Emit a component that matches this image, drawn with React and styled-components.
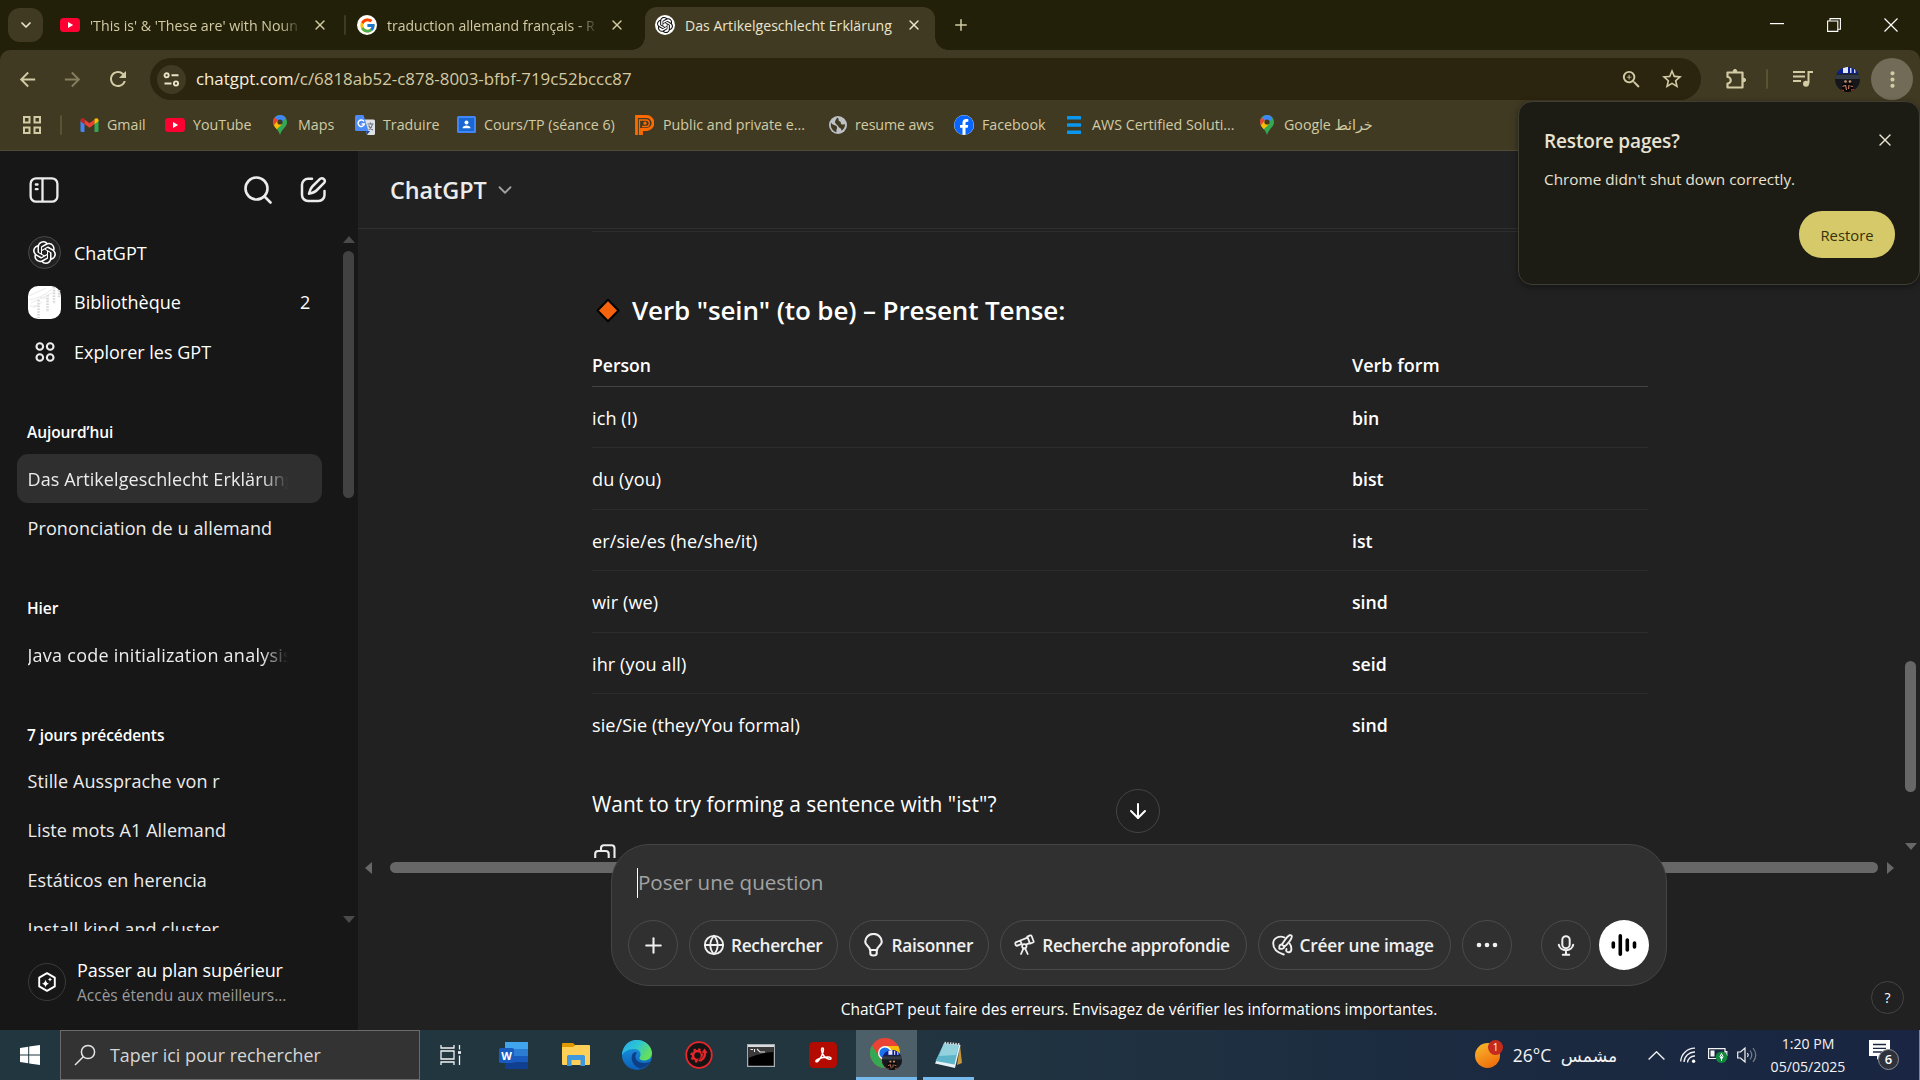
import React from "react";
import styled, { createGlobalStyle, css } from "styled-components";
import { FcGoogle } from "react-icons/fc";
import { FaFacebook } from "react-icons/fa";
import { MdArrowBack, MdArrowForward, MdRefresh, MdZoomIn, MdStarBorder, MdMoreVert } from "react-icons/md";
import { ChevronDown, X, Plus, Globe, ArrowDown } from "lucide-react";

const Global = createGlobalStyle`
  * { box-sizing: border-box; }
  html, body { margin: 0; padding: 0; background: #212121; overflow: hidden; }
  body { font-family: "Open Sans", "Noto Sans", "DejaVu Sans", sans-serif; color: #fff; }
  svg { display: block; flex: none; }
`;

const row = css`
  display: flex;
  align-items: center;
`;

const Screen = styled.div`
  width: 1920px;
  height: 1080px;
  display: flex;
  flex-direction: column;
  overflow: hidden;
  position: relative;
`;

const Txt = styled.span`
  display: block;
  flex: none;
  white-space: nowrap;
  font-size: ${(p) => p.$size || 14}px;
  font-weight: ${(p) => p.$weight || 400};
  letter-spacing: ${(p) => p.$ls || 0}px;
  color: ${(p) => p.$color || "inherit"};
  width: ${(p) => (p.$w ? `${p.$w}px` : "auto")};
`;

const FadeTxt = styled(Txt)`
  overflow: hidden;
  mask-image: linear-gradient(to right, #000 calc(100% - ${(p) => p.$fade || 22}px), transparent);
`;

/* ---------- Browser chrome ---------- */

const TabStrip = styled.div`
  ${row}
  height: 50px;
  flex: none;
  background: #232009;
  padding-left: 8px;
  color: #d2cba4;
`;

const TabSearch = styled.div`
  ${row}
  justify-content: center;
  width: 35px;
  height: 34px;
  border-radius: 12px;
  background: #403a23;
  color: #e8e2c6;
`;

const Tab = styled.div`
  ${row}
  width: ${(p) => p.$width}px;
  padding-left: ${(p) => p.$pad}px;
  gap: 10px;
  height: 43px;
  position: relative;
`;

const ActiveTab = styled(Tab)`
  align-self: flex-end;
  padding-bottom: 7px;
  background: #403a23;
  border-radius: 12px 12px 0 0;
  color: #ebe4ca;
  &::before, &::after {
    content: "";
    position: absolute;
    bottom: 0;
    width: 13px;
    height: 13px;
  }
  &::before {
    left: -13px;
    background: radial-gradient(circle at 0 0, transparent 12.5px, #403a23 13px);
  }
  &::after {
    right: -13px;
    background: radial-gradient(circle at 100% 0, transparent 12.5px, #403a23 13px);
  }
`;

const Divider = styled.span`
  width: 2px;
  height: 20px;
  border-radius: 1px;
  flex: none;
  background: ${(p) => p.$color || "#403a23"};
  margin: 0 ${(p) => p.$after || 0}px 0 ${(p) => p.$before || 0}px;
`;

const Round = styled.span`
  ${row}
  justify-content: center;
  flex: none;
  width: ${(p) => p.$d}px;
  height: ${(p) => p.$d}px;
  border-radius: 50%;
  background: ${(p) => p.$bg || "transparent"};
  border: ${(p) => (p.$line ? `1px solid ${p.$line}` : "none")};
  margin-left: ${(p) => p.$ml || 0}px;
  color: ${(p) => p.$color || "inherit"};
`;

const WindowButtons = styled.div`
  ${row}
  gap: 43px;
  margin-left: auto;
  padding-right: 22px;
`;

const Toolbar = styled.div`
  ${row}
  height: 53px;
  flex: none;
  background: #403a23;
  padding: 5px 7px 0 16px;
  color: #d2cba4;
  border-radius: 10px 10px 0 0;
`;
const ToolbarBack = styled.div`
  background: #232009;
`;

const NavButtons = styled.div`
  ${row}
  gap: 22px;
  width: 134px;
`;

const Omnibox = styled.div`
  ${row}
  width: 1552px;
  height: 42px;
  border-radius: 21px;
  background: #2b240f;
  padding: 0 17px 0 7px;
  gap: 10px;
  & > span { line-height: 24px; }
`;

const Host = styled.span`
  color: #f5efdc;
`;

const OmniActions = styled.div`
  ${row}
  gap: 17px;
  margin-left: auto;
`;

const Extensions = styled.div`
  ${row}
  margin-left: 24px;
  flex: 1;
`;

const Avatar = styled.span`
  width: 25px;
  height: 25px;
  border-radius: 50%;
  overflow: hidden;
  margin-left: 21px;
`;

const Bookmarks = styled.div`
  ${row}
  height: 48px;
  flex: none;
  background: #403a23;
  border-bottom: 1px solid #504b36;
  padding: 0 0 4px 23px;
  color: #d2cba4;
`;

const Bookmark = styled.div`
  ${row}
  width: ${(p) => p.$width}px;
  gap: ${(p) => p.$gap || 8}px;
`;

/* ---------- Restore bubble ---------- */

const Bubble = styled.div`
  position: absolute;
  z-index: 5;
  left: 1518px;
  top: 101px;
  width: 402px;
  height: 184px;
  border-radius: 14px;
  background: #1d1c14;
  border: 1px solid #403e33;
  box-shadow: 0 2px 6px rgba(0, 0, 0, 0.4);
  padding: 26px 24px 26px 25px;
  display: flex;
  flex-direction: column;
  color: #e8e3d2;
`;

const BubbleHead = styled.div`
  display: flex;
  justify-content: space-between;
  align-items: flex-start;
  height: 41px;
  & > svg { margin-top: 2px; }
`;

const RestoreButton = styled.div`
  ${row}
  justify-content: center;
  align-self: flex-end;
  margin-top: auto;
  width: 96px;
  height: 47px;
  border-radius: 23px;
  background: #d5c969;
  color: #37310a;
`;

/* ---------- Page ---------- */

const Page = styled.div`
  display: flex;
  height: 879px;
  flex: none;
`;

const Sidebar = styled.aside`
  width: 358px;
  flex: none;
  background: #171717;
  display: flex;
  flex-direction: column;
  color: #ececec;
`;

const SideTop = styled.div`
  ${row}
  height: 77px;
  flex: none;
  padding: 0 31px 0 29px;
  gap: 28px;
  & > :first-child { margin-right: auto; }
`;

const SideScroll = styled.div`
  display: flex;
  height: 703px;
  overflow: hidden;
`;

const SideList = styled.div`
  width: 322px;
  padding-left: 17px;
`;

const SideLink = styled.div`
  ${row}
  height: ${(p) => p.$h || 49}px;
  padding: 0 12px 0 11px;
  gap: 13px;
  color: #fff;
`;

const SideHeading = styled.div`
  height: 33px;
  margin-top: ${(p) => p.$mt}px;
  padding-left: 10px;
  display: flex;
  color: #fff;
  & > span { line-height: 22px; }
`;

const ChatItem = styled.div`
  ${row}
  height: 49.2px;
  padding-left: 10.5px;
  border-radius: 11px;
  background: ${(p) => (p.$active ? "#2f2f2f" : "transparent")};
`;

const SideBar = styled.div`
  display: flex;
  flex-direction: column;
  align-items: center;
  width: 13px;
  margin-left: 20px;
  padding: 8px 0 8px;
  & > :nth-child(2) { margin: 8px 0 auto; }
`;

const Thumb = styled.span`
  flex: none;
  border-radius: 6px;
  background: ${(p) => p.$color};
  width: ${(p) => p.$w}px;
  height: ${(p) => p.$h}px;
`;

const Arrow = styled.span`
  width: 0;
  height: 0;
  flex: none;
  border: 6.5px solid transparent;
  ${(p) => p.$dir === "up" && css`border-top: 0; border-bottom: 7px solid ${p.$color};`}
  ${(p) => p.$dir === "down" && css`border-bottom: 0; border-top: 7px solid ${p.$color};`}
  ${(p) => p.$dir === "left" && css`border-left: 0; border-right: 7px solid ${p.$color};`}
  ${(p) => p.$dir === "right" && css`border-right: 0; border-left: 7px solid ${p.$color};`}
`;

const Upgrade = styled.div`
  ${row}
  flex: 1;
  padding: 2px 0 0 28px;
  gap: 11px;
`;

const UpgradeText = styled.div`
  display: flex;
  flex-direction: column;
  padding-top: 3px;
  & > span { line-height: 25px; }
`;

const Main = styled.main`
  flex: 1;
  background: #212121;
  display: flex;
  flex-direction: column;
  position: relative;
`;

const ChatHeader = styled.header`
  ${row}
  height: 78px;
  flex: none;
  border-bottom: 1px solid #2f2f2f;
  padding-left: 32px;
  gap: 7px;
  color: #ececec;
`;

const Viewport = styled.div`
  height: 629px;
  overflow: hidden;
  display: flex;
  justify-content: space-between;
`;

const Article = styled.article`
  width: 1056px;
  margin: 2px 0 0 234px;
  border-top: 1px solid #2d2d2d;
`;

const Title = styled.h3`
  ${row}
  margin: 58px 0 0;
  height: 40px;
  gap: 12px;
  padding-left: 4px;
`;

const TableRow = styled.div`
  display: grid;
  grid-template-columns: 760px 1fr;
  align-items: center;
  height: ${(p) => (p.$head ? 57 : 61.4)}px;
  padding-top: ${(p) => (p.$head ? 14 : 1.5)}px;
  border-bottom: ${(p) => (p.$head ? "1px solid #454545" : p.$last ? "none" : "1px solid #2d2d2d")};
`;

const Question = styled.div`
  ${row}
  height: 40px;
  margin-top: 29px;
`;

const CopyLine = styled.div`
  padding: 20px 0 0 2px;
`;

const MainBar = styled.div`
  display: flex;
  flex-direction: column;
  align-items: center;
  width: 13px;
  margin-right: 3px;
  padding: 432px 0 8px;
  justify-content: space-between;
`;

const HBar = styled.div`
  ${row}
  height: 19px;
  padding-left: 7px;
  & > :nth-child(2) { margin: 0 9px 0 18px; }
`;

const BottomArea = styled.div`
  flex: 1;
  ${row}
  align-items: flex-end;
  justify-content: flex-end;
`;

const Note = styled.div`
  ${row}
  justify-content: center;
  width: 1056px;
  height: 42px;
  margin-right: 204px;
`;

const HelpWrap = styled.div`
  width: 49px;
  height: 49px;
`;

const ScrollDown = styled.div`
  position: absolute;
  left: 758px;
  top: 638px;
`;

const Composer = styled.div`
  position: absolute;
  left: 253px;
  top: 693px;
  width: 1056px;
  height: 142px;
  border-radius: 38px;
  background: #303030;
  border: 1px solid #454545;
  padding: 22px 17px 15px 16px;
  display: flex;
  flex-direction: column;
  justify-content: space-between;
`;

const Field = styled.div`
  ${row}
  height: 31px;
  padding-left: 9px;
  & > span { line-height: 26px; padding-bottom: 2px; }
`;

const Caret = styled.i`
  width: 1px;
  height: 30px;
  background: #fff;
`;

const Tools = styled.div`
  ${row}
  gap: 11px;
`;

const Pill = styled.div`
  ${row}
  height: 50px;
  width: ${(p) => p.$w}px;
  padding-left: ${(p) => p.$pad || 13}px;
  border-radius: 25px;
  border: 1px solid #4b4b4b;
  gap: ${(p) => p.$gap || 6}px;
  color: #f0f0f0;
`;

/* ---------- Taskbar ---------- */

const Taskbar = styled.div`
  ${row}
  height: 50px;
  flex: none;
  background: linear-gradient(90deg, #21363e 0%, #22363f 40%, #1f3141 60%, #1b2a40 78%, #192542 100%);
  color: #f3f3f3;
`;

const Cell = styled.div`
  ${row}
  justify-content: center;
  flex: none;
  height: 50px;
  width: ${(p) => p.$w}px;
  margin-left: ${(p) => p.$ml || 0}px;
  background: ${(p) => (p.$active ? "#4d5f68" : "transparent")};
  border-bottom: ${(p) => (p.$open ? "3px solid #76b9ed" : "none")};
  padding-top: ${(p) => (p.$open ? 2 : 0)}px;
`;

const WinSearch = styled.div`
  ${row}
  width: 360px;
  height: 50px;
  background: #333333;
  border: 1px solid #6b6b6b;
  padding-left: 13px;
  gap: 14px;
`;

const Tray = styled.div`
  ${row}
  margin-left: auto;
  width: 445px;
`;

const Clock = styled.div`
  width: 90px;
  display: flex;
  flex-direction: column;
  align-items: center;
  margin-left: 5px;
  & > span { line-height: 23px; }
`;

const ShowDesktop = styled.span`
  width: 1px;
  height: 50px;
  background: #7c8496;
  margin-left: 20px;
`;

/* ---------- Icons ---------- */

const OpenAI = ({ size, color }) => (
  <svg width={size} height={size} viewBox="0 0 24 24" fill={color}>
    <path d="M22.2819 9.8211a5.9847 5.9847 0 0 0-.5157-4.9108 6.0462 6.0462 0 0 0-6.5098-2.9A6.0651 6.0651 0 0 0 4.9807 4.1818a5.9847 5.9847 0 0 0-3.9977 2.9 6.0462 6.0462 0 0 0 .7427 7.0966 5.98 5.98 0 0 0 .511 4.9107 6.051 6.051 0 0 0 6.5146 2.9001A5.9847 5.9847 0 0 0 13.2599 24a6.0557 6.0557 0 0 0 5.7718-4.2058 5.9894 5.9894 0 0 0 3.9977-2.9001 6.0557 6.0557 0 0 0-.7475-7.0729zm-9.022 12.6081a4.4755 4.4755 0 0 1-2.8764-1.0408l.1419-.0804 4.7783-2.7582a.7948.7948 0 0 0 .3927-.6813v-6.7369l2.02 1.1686a.071.071 0 0 1 .038.052v5.5826a4.504 4.504 0 0 1-4.4945 4.4944zm-9.6607-4.1254a4.4708 4.4708 0 0 1-.5346-3.0137l.142.0852 4.783 2.7582a.7712.7712 0 0 0 .7806 0l5.8428-3.3685v2.3324a.0804.0804 0 0 1-.0332.0615L9.74 19.9502a4.4992 4.4992 0 0 1-6.1408-1.6464zM2.3408 7.8956a4.485 4.485 0 0 1 2.3655-1.9728V11.6a.7664.7664 0 0 0 .3879.6765l5.8144 3.3543-2.0201 1.1685a.0757.0757 0 0 1-.071 0l-4.8303-2.7865A4.504 4.504 0 0 1 2.3408 7.872zm16.5963 3.8558L13.1038 8.364 15.1192 7.2a.0757.0757 0 0 1 .071 0l4.8303 2.7913a4.4944 4.4944 0 0 1-.6765 8.1042v-5.6772a.79.79 0 0 0-.407-.667zm2.0107-3.0231l-.142-.0852-4.7735-2.7818a.7759.7759 0 0 0-.7854 0L9.409 9.2297V6.8974a.0662.0662 0 0 1 .0284-.0615l4.8303-2.7866a4.4992 4.4992 0 0 1 6.6802 4.66zM8.3065 12.863l-2.02-1.1638a.0804.0804 0 0 1-.038-.0567V6.0742a4.4992 4.4992 0 0 1 7.3757-3.4537l-.142.0805L8.704 5.459a.7948.7948 0 0 0-.3927.6813zm1.0976-2.3654l2.602-1.4998 2.6069 1.4998v2.9994l-2.5974 1.4997-2.6067-1.4997Z" />
  </svg>
);

const YouTube = () => (
  <svg width="20" height="14" viewBox="0 0 20 14">
    <rect width="20" height="14" rx="3.5" fill="#ff0033" />
    <path d="M8 4l5.2 3L8 10z" fill="#fff" />
  </svg>
);

const Gmail = () => (
  <svg width="19" height="14" viewBox="0 0 18 14">
    <path d="M0 2.5V12.7Q0 14 1.3 14H4V6z" fill="#4285f4" />
    <path d="M18 2.5V12.7Q18 14 16.7 14H14V6z" fill="#34a853" />
    <path d="M4 1.4L9 5.2 14 1.4V6L9 9.8 4 6z" fill="#ea4335" />
    <path d="M0 2.3C0 .2 2.2-.6 4 1V6.2L0 3.2z" fill="#c5221f" />
    <path d="M18 2.3C18 .2 15.8-.6 14 1V6.2L18 3.2z" fill="#fbbc04" />
  </svg>
);

const MapsPin = () => (
  <svg width="14" height="20" viewBox="0 0 14 20">
    <path d="M7 0C3 0 0 3.1 0 7c0 2 .8 3.500 1.800 4.800C4 14.500 6 16.500 7 20c1-3.500 3-5.500 5.200-8.200C13.200 10.500 14 9 14 7c0-3.900-3-7-7-7z" fill="#34a853" />
    <path d="M7 0c2.400 0 4.500 1.200 5.700 3L7 9.400 2 4.600 3 1.600C4.100.6 5.500 0 7 0z" fill="#4285f4" />
    <path d="M1.600 2.500L5 5.300 1.200 10.900C.5 9.700 0 8.500 0 7c0-1.700.6-3.300 1.600-4.500z" fill="#ea4335" />
    <path d="M.9 10.300L4.800 5.600 9 9.200l-5.300 5C2.800 13 1.700 12 .9 10.300z" fill="#fbbc04" />
    <circle cx="7" cy="7" r="2.600" fill="#403a23" />
  </svg>
);

const Translate = () => (
  <svg width="20" height="20" viewBox="0 0 20 20">
    <path d="M8 4.500H18.500Q20 4.500 20 6V18.500Q20 20 18.500 20H12z" fill="#dfe1e5" />
    <path d="M11 16H15L12 20z" fill="#174ea6" />
    <path d="M1.500 0H8.500L13.500 16H1.500Q0 16 0 14.500V1.500Q0 0 1.500 0z" fill="#4c8bf5" />
    <path d="M9 6.500A3.200 3.200 0 1 0 9.400 9H6.600" fill="none" stroke="#fff" strokeWidth="1.400" />
    <path d="M12.500 9H18.500M15.500 7.500V9M17.500 9C17 12 15 14 13.800 14.800M13.600 10.500C14.500 12.500 16 14 18 15" fill="none" stroke="#6b7280" strokeWidth="1.200" />
  </svg>
);

const Classroom = () => (
  <svg width="19" height="17" viewBox="0 0 19 17">
    <rect width="19" height="17" rx="1.500" fill="#4285f4" />
    <rect x="2" y="2" width="15" height="13" fill="#1967d2" />
    <circle cx="9.500" cy="6.500" r="2" fill="#fff" />
    <path d="M5.500 12.300C5.500 10.400 7.500 9.600 9.500 9.600s4 .8 4 2.700z" fill="#fff" />
  </svg>
);

const OrangeP = () => (
  <svg width="19" height="20" viewBox="0 0 19 20" fill="none" stroke="#ff6a00">
    <path d="M1.500 20V1.500H11.500A6 6 0 0 1 11.500 14.500H6.500V20" strokeWidth="2.800" />
    <path d="M4.500 20V5H11A3 3 0 0 1 11 11.500H7" strokeWidth="1.300" />
    <circle cx="10" cy="8.200" r="1.600" fill="#ff6a00" stroke="none" />
  </svg>
);

const GreyGlobe = () => (
  <svg width="18" height="18" viewBox="0 0 18 18">
    <circle cx="9" cy="9" r="9" fill="#bdc1c6" />
    <path d="M2 6.500C3.500 9.500 7.500 8.800 8 11c.4 2-1 2.500-.5 5.200C3.500 15.600 1 11 2 6.500zM8 1.800C11 2.500 8.500 4.500 10.500 5.200 12.800 6 11 8.200 13 8.500c1.500.2 2.400-.4 3.200-.2-.2 3.500-2.200 5.600-3.700 6.500 0-2.800-1.800-2.300-3-4C8.500 8.500 5.800 7.800 6 5.800 6.200 4.200 7.500 3.500 8 1.800z" fill="#403a23" />
  </svg>
);

const Bars = () => (
  <svg width="14" height="18" viewBox="0 0 14 18" fill="#0a97f0">
    <rect width="14" height="3.600" rx=".6" />
    <rect y="7.200" width="14" height="3.600" rx=".6" />
    <rect y="14.400" width="14" height="3.600" rx=".6" />
  </svg>
);

const AppsGrid = () => (
  <svg width="18" height="18" viewBox="0 0 18 18" fill="none" stroke="#d2cba4" strokeWidth="2">
    <rect x="1" y="1" width="5.500" height="5.500" />
    <rect x="11.500" y="1" width="5.500" height="5.500" />
    <rect x="1" y="11.500" width="5.500" height="5.500" />
    <rect x="11.500" y="11.500" width="5.500" height="5.500" />
  </svg>
);

const SiteTune = () => (
  <svg width="17" height="15" viewBox="0 0 17 15" fill="none" stroke="#e8e2c6" strokeWidth="1.900">
    <circle cx="3.600" cy="3.300" r="2.100" />
    <path d="M8.500 3.300H15.500M1.500 11.500H8.500" />
    <circle cx="13" cy="11.500" r="2.100" />
  </svg>
);

const Puzzle = () => (
  <svg width="22" height="22" viewBox="0 0 22 22" fill="none" stroke="#d2cba4" strokeWidth="2.200" strokeLinejoin="round">
    <path d="M2.500 4.500H17.500V19.500H2.500V15.500A3.200 3.200 0 0 0 2.500 9z" />
    <path d="M8.200 4V3.200a1.800 1.800 0 0 1 3.600 0V4zM18 10.200h.8a1.800 1.800 0 0 1 0 3.600H18z" fill="#d2cba4" strokeWidth="1" />
  </svg>
);

const MusicQueue = () => (
  <svg width="21" height="18" viewBox="0 0 21 18" fill="none" stroke="#d2cba4" strokeWidth="2">
    <path d="M0 2H12M0 6.500H12M0 11H8" />
    <path d="M15.500 13.500V2H20" />
    <circle cx="13" cy="13.700" r="3" fill="#d2cba4" stroke="none" />
  </svg>
);

const Photo = ({ size }) => (
  <svg width={size} height={size} viewBox="0 0 25 25">
    <clipPath id={`ph${size}`}><circle cx="12.500" cy="12.500" r="12.500" /></clipPath>
    <g clipPath={`url(#ph${size})`}>
      <rect width="25" height="25" fill="#20242b" />
      <rect width="25" height="6.500" fill="#0a1f9c" />
      <rect x="8" y="0" width="5" height="6" fill="#e8e8f2" />
      <rect x="15" y="1" width="1.500" height="5" fill="#cfd6f5" />
      <rect x="19" y="1" width="1.500" height="5" fill="#cfd6f5" />
      <rect y="8" width="25" height="4" fill="#343b45" />
      <rect y="12" width="25" height="13" fill="#15171b" />
      <path d="M7 25V17q3-3 5 0 3-3 6 0V25z" fill="#08080a" />
      <circle cx="10.500" cy="14.500" r="1.300" fill="#c98f6d" />
      <circle cx="15" cy="14.500" r="1.300" fill="#c98f6d" />
      <path d="M7.500 19.500l2.500-1M10.500 18l1 5M14 18l-.5 4M15.500 19l2.500.5" stroke="#c07a5c" strokeWidth="1.200" />
      <path d="M6 23.500h3M16 23h4" stroke="#a33a2c" strokeWidth="1.400" />
    </g>
  </svg>
);

const PanelIcon = () => (
  <svg width="30" height="26" viewBox="0 0 30 26" fill="none" stroke="#ececec" strokeWidth="2.300" strokeLinecap="round">
    <rect x="1.600" y="1.300" width="26.800" height="23.400" rx="5.500" />
    <path d="M13.500 1.300V24.700" strokeLinecap="butt" />
    <path d="M6.800 7.500H8.600M6.800 12.200H8.600" />
  </svg>
);

const SearchIcon = () => (
  <svg width="28" height="28" viewBox="0 0 28 28" fill="none" stroke="#ececec" strokeWidth="2.600" strokeLinecap="round">
    <circle cx="12.500" cy="12.500" r="11" />
    <path d="M20.500 20.500L26.500 26.500" />
  </svg>
);

const NewChat = () => (
  <svg width="27" height="27" viewBox="0 0 27 27" fill="none" stroke="#ececec" strokeWidth="2.500" strokeLinecap="round" strokeLinejoin="round">
    <path d="M12 2.800H8A6 6 0 0 0 2 8.800V19a6 6 0 0 0 6 6H18.500a6 6 0 0 0 6-6V15" />
    <path d="M20.300 2.700a2.900 2.900 0 0 1 4 4L16.500 14.500C14.500 16.500 12 17 9 17.700 9.800 14.800 10.300 12.500 12.300 10.500z" />
  </svg>
);

const Library = () => (
  <svg width="33" height="33" viewBox="0 0 33 33">
    <rect width="33" height="33" rx="10" fill="#fff" />
    <g stroke="#d6d6d6" strokeWidth="2.600" strokeDasharray="1.600 1.200">
      <path d="M26 1V18M19.500 9V26M10.500 14V32M31 4V11" />
    </g>
    <path d="M1 14Q14 12 24 3M1 10L18 2M3 17L24 7M5 22L14 16M2 20H10M12 12H19" fill="none" stroke="#e6e6e6" strokeWidth=".9" />
  </svg>
);

const FourDots = () => (
  <svg width="20" height="20" viewBox="0 0 20 20" fill="none" stroke="#ececec" strokeWidth="2.100">
    <circle cx="4.800" cy="4.500" r="3.300" />
    <circle cx="15.200" cy="4.500" r="3.300" />
    <circle cx="4.800" cy="15.500" r="3.300" />
    <circle cx="15.200" cy="15.500" r="3.300" />
  </svg>
);

const PlanIcon = () => (
  <svg width="20" height="20" viewBox="0 0 20 20" fill="none" stroke="#fff" strokeWidth="1.900" strokeLinejoin="round">
    <path d="M10 1.200L17.800 5.600V14.400L10 18.800 2.200 14.400V5.600z" />
    <path d="M8.500 7.500Q9 11 12 11.700 9 12.300 8.500 15.500 8 12.300 5 11.700 8 11 8.500 7.500zM13 5.200Q13.200 7.200 15 7.600 13.200 8 13 9.800 12.800 8 11 7.600 12.800 7.200 13 5.200z" fill="#fff" stroke="none" />
  </svg>
);

const CopyIcon = () => (
  <svg width="22" height="22" viewBox="0 0 22 22" fill="none" stroke="#ececec" strokeWidth="2.100">
    <rect x="1.200" y="7" width="13.500" height="14" rx="3" />
    <path d="M7 7V4.200A3 3 0 0 1 10 1.200H17.500A3 3 0 0 1 20.500 4.200V15" />
  </svg>
);

const Diamond = () => (
  <svg width="24" height="25" viewBox="0 0 24 25">
    <path d="M12 1.800L22.500 12.500 12 23.200 1.500 12.500z" fill="#f7630c" stroke="#000" strokeWidth="2" strokeLinejoin="round" />
  </svg>
);

const Bulb = () => (
  <svg width="19" height="24" viewBox="0 0 19 24" fill="none" stroke="#f0f0f0" strokeWidth="2.100" strokeLinejoin="round">
    <path d="M6 17C6 13.500 1.200 12.500 1.200 8.800A8.200 7.800 0 0 1 17.800 8.800C17.800 12.500 13 13.500 13 17z" />
    <path d="M6.300 17V20.500Q6.300 22.500 9.500 22.500T12.700 20.500V17" />
  </svg>
);

const Telescope = () => (
  <svg width="21" height="22" viewBox="0 0 21 22" fill="none" stroke="#f0f0f0" strokeWidth="1.800" strokeLinejoin="round" strokeLinecap="round">
    <path d="M13.300 2.600L16.200 1.400Q17.200 1.100 17.600 2L19.600 7.200Q19.900 8.100 19 8.500L16 9.600z" />
    <path d="M13.500 3.600L6.300 6.500M15.500 9.200L12.500 10.400M6.300 6.500L2.200 8.200Q1 8.700 1.400 10L1.700 10.900Q2.200 12.100 3.400 11.600L7.800 9.900M6.300 6.500L7.700 10" />
    <circle cx="10.300" cy="12.300" r="2.200" />
    <path d="M9.500 14.300L7 20M11.100 14.300L13.700 20" />
  </svg>
);

const Brush = () => (
  <svg width="21" height="22" viewBox="0 0 21 22" fill="none" stroke="#f0f0f0" strokeWidth="1.900" strokeLinejoin="round" strokeLinecap="round">
    <path d="M12.500 3.500C7.500 1.200 1.200 3.800 1.200 9.500 1.200 15 6 18.800 11.800 20.500" />
    <path d="M17.300 1.300Q20.300.6 19.700 3.300C18.800 6.300 14.800 10.800 12.300 12.800L10 10.400C12 7.200 14.800 2.500 17.300 1.300z" />
    <path d="M10 10.500C7.200 10.300 7.200 12.500 7.400 14.800 9.800 15 12.200 15 12.300 12.700" />
    <path d="M17.600 9.500C20.300 13 20 18 16.800 18.200 14.500 18.300 13.600 16.700 14.500 15" />
  </svg>
);

const Mic = () => (
  <svg width="18" height="21" viewBox="0 0 18 21" fill="none" stroke="#f0f0f0" strokeWidth="2" strokeLinecap="round">
    <rect x="5.300" y="1.200" width="7.400" height="12" rx="3.700" />
    <path d="M1.800 9.800A7.300 6.500 0 0 0 16.200 9.800M9 16.500V19.500M5.800 19.700H12.200" />
  </svg>
);

const Voice = () => (
  <svg width="26" height="24" viewBox="0 0 26 24" fill="none" stroke="#000" strokeWidth="3.600" strokeLinecap="round">
    <path d="M2.300 10V14M9.300 2.800V21.200M16.300 7V17M23.500 10V14" />
  </svg>
);

const Dots = () => (
  <svg width="22" height="6" viewBox="0 0 22 6" fill="#f0f0f0">
    <circle cx="3" cy="3" r="2.300" />
    <circle cx="11" cy="3" r="2.300" />
    <circle cx="19" cy="3" r="2.300" />
  </svg>
);

const Minimize = () => (
  <svg width="14" height="14" viewBox="0 0 14 14"><rect y="5" width="14" height="1.200" fill="#fff" /></svg>
);
const Restore = () => (
  <svg width="14" height="14" viewBox="0 0 14 14" fill="none" stroke="#fff" strokeWidth="1.100">
    <path d="M.6 3H10.800V13.400H.6zM3 3V.6H13.400V11.200H10.800" />
  </svg>
);
const CloseWin = () => (
  <svg width="14" height="14" viewBox="0 0 14 14" stroke="#fff" strokeWidth="1.200"><path d="M.5.5L13.500 13.500M13.500.5L.5 13.500" /></svg>
);

const WindowsLogo = () => (
  <svg width="20" height="20" viewBox="0 0 20 20" fill="#fff">
    <path d="M0 2.900L8.200 1.700V9.500H0zM9.200 1.500L20 0V9.500H9.200zM0 10.500H8.200V18.300L0 17.100zM9.200 10.500H20V20L9.200 18.500z" />
  </svg>
);

const WinSearchIcon = () => (
  <svg width="22" height="22" viewBox="0 0 22 22" fill="none" stroke="#e6e6e6" strokeWidth="1.500">
    <circle cx="14" cy="8" r="6.600" />
    <path d="M9.300 12.700L1 21" />
  </svg>
);

const TaskView = () => (
  <svg width="22" height="20" viewBox="0 0 22 20" fill="none" stroke="#f3f3f3" strokeWidth="1.300">
    <path d="M1 0V3H14V0M1 20V17H14V20M1 6H14V14H1zM19.500 0V4.500M19.500 10.500V20" />
    <rect x="18" y="6.200" width="3" height="2.600" fill="#f3f3f3" stroke="none" />
  </svg>
);

const WordTile = styled.span`
  position: absolute;
  left: 0;
  top: 6px;
  width: 15px;
  height: 15px;
  border-radius: 1.5px;
  background: #185abd;
  color: #fff;
  font-weight: 700;
  font-size: 11px;
  line-height: 15px;
  text-align: center;
`;
const WordBox = styled.span`
  position: relative;
  width: 29px;
  height: 27px;
  padding-left: 6px;
`;
const Word = () => (
  <WordBox>
    <svg width="23" height="27" viewBox="0 0 23 27">
      <rect width="23" height="7" fill="#41a5ee" />
      <rect y="7" width="23" height="7" fill="#2b7cd3" />
      <rect y="14" width="23" height="6.500" fill="#185abd" />
      <rect y="20.500" width="23" height="6.500" fill="#103f91" />
    </svg>
    <WordTile>W</WordTile>
  </WordBox>
);

const Folder = () => (
  <svg width="28" height="24" viewBox="0 0 28 24">
    <path d="M0 1Q0 0 1 0H11L13.500 2.500V6H0z" fill="#e09a00" />
    <path d="M0 4H11L13.500 2H27Q28 2 28 3V21Q28 22 27 22H1Q0 22 0 21z" fill="#ffd057" />
    <path d="M5 13.500Q5 12 6.500 12H21.500Q23 12 23 13.500V23H18.500V17H9.500V23H5z" fill="#3f98dd" />
  </svg>
);

const Edge = () => (
  <svg width="30" height="30" viewBox="0 0 30 30">
    <defs>
      <linearGradient id="edgeA" x1="0" y1="0" x2="1" y2=".5"><stop offset="0" stopColor="#28a8ea" /><stop offset=".5" stopColor="#2cc4d6" /><stop offset="1" stopColor="#66e05a" /></linearGradient>
      <linearGradient id="edgeB" x1="0" y1="0" x2="0" y2="1"><stop offset="0" stopColor="#1b9de2" /><stop offset="1" stopColor="#0c5fba" /></linearGradient>
    </defs>
    <circle cx="15" cy="15" r="15" fill="url(#edgeB)" />
    <path d="M1 10C4 2 10 0 15 0 24 0 30 7 30 13c0 5-4 7.500-8 7.500-3.500 0-5-1.500-4.500-3C19.500 15 19 9 12 9 6 9 2 12 0 15 0 13 .3 11.500 1 10z" fill="url(#edgeA)" />
    <path d="M10.500 14C8 19 11 26 18 28.500 22 28 26.500 25 28.200 21.500 24 24 15 24 13.500 17.500 13.200 15.500 14 13.500 15 12.500 13 12 11.500 12.500 10.500 14z" fill="#0d3f86" />
  </svg>
);

const RedGear = () => (
  <svg width="28" height="28" viewBox="0 0 28 28">
    <circle cx="14" cy="14" r="12.800" fill="#141414" stroke="#e8262b" strokeWidth="1.800" />
    <circle cx="12.500" cy="14.500" r="4.500" fill="none" stroke="#e8262b" strokeWidth="2.600" />
    <circle cx="12.500" cy="14.500" r="6.300" fill="none" stroke="#e8262b" strokeWidth="1.800" strokeDasharray="2.400 2.550" />
    <path d="M13 18.500Q18.500 18 18.500 12H16L19.500 7 23 12H21.500Q21.500 19.500 14 21z" fill="#e8262b" stroke="#141414" strokeWidth=".6" />
  </svg>
);

const Cmd = () => (
  <svg width="28" height="23" viewBox="0 0 28 23">
    <rect x=".6" y=".6" width="26.800" height="21.800" fill="#000" stroke="#a7adb0" strokeWidth="1.300" />
    <rect x="1" y="1" width="26" height="2" fill="#d9dcde" />
    <path d="M1.300 3H26.700V8Q12 9 1.300 14z" fill="#3a3a3a" />
    <path d="M3.500 5.500H6M7.500 5V8M10 5L13 8H18" stroke="#e6e6e6" strokeWidth="1.100" fill="none" />
  </svg>
);

const Acrobat = () => (
  <svg width="28" height="26" viewBox="0 0 28 26">
    <rect width="28" height="26" rx="4.500" fill="#b30b00" />
    <path d="M7 19.500C6 18.300 10 16.300 14 15.500s8-.7 8 1-4.500.5-7-2.500-3.200-8-1.500-8 .8 4.500-1 8-4.500 7-5.500 5.500z" fill="none" stroke="#fff" strokeWidth="1.500" />
  </svg>
);

const Chrome = () => (
  <svg width="34" height="33" viewBox="0 0 34 33">
    <circle cx="15" cy="15" r="15" fill="#ea4335" />
    <path d="M2 7.500L9.500 19 15 30A15 15 0 0 1 2 7.500z" fill="#34a853" />
    <path d="M15 30L21 18 15 8H28.300A15 15 0 0 1 15 30z" fill="#fbbc04" />
    <circle cx="15" cy="15" r="7" fill="#fff" />
    <circle cx="15" cy="15" r="5.600" fill="#1a73e8" />
    <g transform="translate(12 12)"><Photo size={20} /></g>
  </svg>
);

const Notepad = () => (
  <svg width="28" height="28" viewBox="0 0 28 28">
    <path d="M25 4L27 22 22 24z" fill="#c8963a" />
    <path d="M9 2.500L25.500 4 20 27 0 22.500z" fill="#e9f2f4" />
    <path d="M9 2.500L24 4 19.500 23.500 .5 20z" fill="#5cb5c8" />
    <path d="M9 2.500L24 4 21 14 4 15z" fill="#a6dbe4" opacity=".75" />
    <path d="M9.500 2L25.500 3.500" stroke="#d8d8d8" strokeWidth="2.400" strokeDasharray="1.500 1.200" />
  </svg>
);

const SunBox = styled.span`
  position: relative;
  width: 28px;
  height: 30px;
  padding-top: 3px;
`;
const CountBadge = styled.span`
  position: absolute;
  left: 13px;
  top: 0;
  width: 15px;
  height: 15px;
  border-radius: 50%;
  background: #c42b1c;
  color: #fff;
  font-size: 10px;
  line-height: 15px;
  text-align: center;
`;
const NotifyBox = styled.span`
  position: relative;
  width: 30px;
  height: 30px;
`;
const NotifyBadge = styled.span`
  position: absolute;
  left: 9px;
  top: 9px;
  width: 21px;
  height: 21px;
  border-radius: 50%;
  border: 1px solid #8b8f99;
  background: #30323b;
  color: #fff;
  font-weight: 600;
  font-size: 13px;
  line-height: 19px;
  text-align: center;
`;

const WifiIcon = () => (
  <svg width="16" height="17" viewBox="0 0 16 17" fill="none" stroke="#f3f3f3" strokeWidth="1.300">
    <path d="M.7 14.500A14 14 0 0 1 15 1.200M4 15A10.500 10.500 0 0 1 15 5M7.500 15.500A7 7 0 0 1 15 9" />
    <circle cx="13.600" cy="14.300" r="1.700" fill="#fff" stroke="none" />
  </svg>
);
const Battery = () => (
  <svg width="20" height="16" viewBox="0 0 20 16">
    <path d="M.6 1.600H17V11.500H.6zM17.500 4.500H18.800V8.500H17.500" fill="none" stroke="#f3f3f3" strokeWidth="1.200" />
    <rect x="2.500" y="3.500" width="4" height="6" fill="#f3f3f3" />
    <circle cx="13.500" cy="10.200" r="5.800" fill="#10893e" />
    <path d="M13.500 6.500Q16.500 9.500 13.500 12.500 10.500 9.500 13.500 6.500zM13.500 9V14" fill="none" stroke="#fff" strokeWidth="1" />
  </svg>
);
const Sound = () => (
  <svg width="21" height="18" viewBox="0 0 21 18" fill="none" stroke="#f3f3f3" strokeWidth="1.200">
    <path d="M.7 6V12H3.500L8 16V2L3.500 6z" />
    <path d="M10.500 7Q12 9 10.500 11" />
    <path d="M13 4.500Q16.500 9 13 13.500M16 2Q21.500 9 16 16" stroke="#77808f" />
  </svg>
);

/* ---------- Data ---------- */

const bookmarks = [
  { icon: <Gmail />, label: "Gmail", width: 85 },
  { icon: <YouTube />, label: "YouTube", width: 108 },
  { icon: <MapsPin />, label: "Maps", width: 82, gap: 11 },
  { icon: <Translate />, label: "Traduire", width: 102 },
  { icon: <Classroom />, label: "Cours/TP (séance 6)", width: 178 },
  { icon: <OrangeP />, label: "Public and private e...", width: 194, gap: 9 },
  { icon: <GreyGlobe />, label: "resume aws", width: 125, gap: 8, ls: -0.1 },
  { icon: <FaFacebook size={20} color="#0866ff" />, label: "Facebook", width: 113, fb: true },
  { icon: <Bars />, label: "AWS Certified Soluti...", width: 193, gap: 11 },
  { icon: <MapsPin />, label: "Google خرائط", width: 122, gap: 10 },
];

const verbs = [
  ["ich (I)", "bin"],
  ["du (you)", "bist"],
  ["er/sie/es (he/she/it)", "ist"],
  ["wir (we)", "sind"],
  ["ihr (you all)", "seid"],
  ["sie/Sie (they/You formal)", "sind"],
];

const LINK = { $size: 18, $ls: 0 };
const CHAT = { $size: 18, $ls: 0.1 };
const HEADING = { $size: 15.5, $weight: 600, $ls: -0.08 };
const TOOL = { $size: 17.3, $weight: 600, $ls: -0.35 };

export default function App() {
  return (
    <Screen>
      <Global />
      <TabStrip>
        <TabSearch><ChevronDown size={16} strokeWidth={2.6} /></TabSearch>
        <Tab $width={301} $pad={17}>
          <YouTube />
          <FadeTxt $w={212} $size={14.2}>'This is' &amp; 'These are' with Noun</FadeTxt>
          <X size={16} strokeWidth={2} />
        </Tab>
        <Divider $after={11} />
        <Tab $width={288} $pad={0}>
          <Round $d={20} $bg="#fff"><FcGoogle size={17} /></Round>
          <FadeTxt $w={212}>traduction allemand français - R</FadeTxt>
          <X size={16} strokeWidth={2} />
        </Tab>
        <ActiveTab $width={290} $pad={10}>
          <Round $d={20} $bg="#fff"><OpenAI size={16} color="#111" /></Round>
          <Txt $w={211} $size={14.1}>Das Artikelgeschlecht Erklärung</Txt>
          <X size={16} strokeWidth={2.2} />
        </ActiveTab>
        <Round $d={34} $ml={9}><Plus size={18} strokeWidth={2} /></Round>
        <WindowButtons>
          <Minimize />
          <Restore />
          <CloseWin />
        </WindowButtons>
      </TabStrip>

      <ToolbarBack>
        <Toolbar>
          <NavButtons>
            <MdArrowBack size={23} />
            <MdArrowForward size={23} color="#857e5f" />
            <MdRefresh size={24} />
          </NavButtons>
          <Omnibox>
            <Round $d={29} $bg="#403a23"><SiteTune /></Round>
            <Txt $size={16.9} $color="#d2cba4"><Host>chatgpt.com</Host>/c/6818ab52-c878-8003-bfbf-719c52bccc87</Txt>
            <OmniActions>
              <MdZoomIn size={23} />
              <MdStarBorder size={24} />
            </OmniActions>
          </Omnibox>
          <Extensions>
            <Puzzle />
            <Divider $before={19} $after={25} $color="#5a5334" />
            <MusicQueue />
            <Avatar><Photo size={25} /></Avatar>
            <Round $d={42} $ml={11} $bg="#716b58"><MdMoreVert size={25} /></Round>
          </Extensions>
        </Toolbar>
      </ToolbarBack>

      <Bookmarks>
        <AppsGrid />
        <Divider $before={19} $after={18} $color="#5a5334" />
        {bookmarks.map((b) => (
          <Bookmark key={b.label} $width={b.width} $gap={b.gap}>
            {b.fb ? <Round $d={20} $bg="#fff">{b.icon}</Round> : b.icon}
            <Txt $size={14.25} $ls={b.ls}>{b.label}</Txt>
          </Bookmark>
        ))}
      </Bookmarks>

      <Page>
        <Sidebar>
          <SideTop>
            <PanelIcon />
            <SearchIcon />
            <NewChat />
          </SideTop>
          <SideScroll>
            <SideList>
              <SideLink>
                <Round $d={33} $line="#4a4a4a" $bg="#212121"><OpenAI size={23} color="#fff" /></Round>
                <Txt {...LINK}>ChatGPT</Txt>
              </SideLink>
              <SideLink $h={50}>
                <Library />
                <Txt {...LINK} $w={213}>Bibliothèque</Txt>
                <Txt {...LINK}>2</Txt>
              </SideLink>
              <SideLink>
                <Round $d={33}><FourDots /></Round>
                <Txt {...LINK}>Explorer les GPT</Txt>
              </SideLink>
              <SideHeading $mt={45}><Txt {...HEADING}>Aujourd’hui</Txt></SideHeading>
              <ChatItem $active><FadeTxt {...CHAT} $w={260} $fade={26}>Das Artikelgeschlecht Erklärung</FadeTxt></ChatItem>
              <ChatItem><Txt {...CHAT}>Prononciation de u allemand</Txt></ChatItem>
              <SideHeading $mt={45}><Txt {...HEADING}>Hier</Txt></SideHeading>
              <ChatItem><FadeTxt {...CHAT} $w={260} $ls={0.25} $fade={26}>Java code initialization analysis</FadeTxt></ChatItem>
              <SideHeading $mt={44}><Txt {...HEADING}>7 jours précédents</Txt></SideHeading>
              <ChatItem><Txt {...CHAT}>Stille Aussprache von r</Txt></ChatItem>
              <ChatItem><Txt {...CHAT}>Liste mots A1 Allemand</Txt></ChatItem>
              <ChatItem><Txt {...CHAT}>Estáticos en herencia</Txt></ChatItem>
              <ChatItem><Txt {...CHAT}>Install kind and cluster</Txt></ChatItem>
            </SideList>
            <SideBar>
              <Arrow $dir="up" $color="#4a4a4a" />
              <Thumb $w={11} $h={247} $color="#424242" />
              <Arrow $dir="down" $color="#4a4a4a" />
            </SideBar>
          </SideScroll>
          <Upgrade>
            <Round $d={38} $line="#3a3a3a"><PlanIcon /></Round>
            <UpgradeText>
              <Txt $size={18} $ls={-0.1} $color="#fff">Passer au plan supérieur</Txt>
              <Txt $size={15.5} $color="#9b9b9b">Accès étendu aux meilleurs...</Txt>
            </UpgradeText>
          </Upgrade>
        </Sidebar>

        <Main>
          <ChatHeader>
            <Txt $size={23.4} $weight={600} $ls={-0.05}>ChatGPT</Txt>
            <ChevronDown size={22} color="#a0a0a0" strokeWidth={2} />
          </ChatHeader>
          <Viewport>
            <Article>
              <Title>
                <Diamond />
                <Txt $size={26} $weight={600} $ls={-0.12}>Verb "sein" (to be) – Present Tense:</Txt>
              </Title>
              <TableRow $head>
                <Txt $size={17.6} $weight={600}>Person</Txt>
                <Txt $size={18} $weight={600}>Verb form</Txt>
              </TableRow>
              {verbs.map(([person, form], i) => (
                <TableRow key={person} $last={i === verbs.length - 1}>
                  <Txt $size={18.1} $ls={0.08}>{person}</Txt>
                  <Txt $size={17.7} $weight={600}>{form}</Txt>
                </TableRow>
              ))}
              <Question><Txt $size={20.9} $ls={0.05}>Want to try forming a sentence with "ist"?</Txt></Question>
              <CopyLine><CopyIcon /></CopyLine>
            </Article>
            <MainBar>
              <Thumb $w={11} $h={131} $color="#676767" />
              <Arrow $dir="down" $color="#676767" />
            </MainBar>
          </Viewport>
          <HBar>
            <Arrow $dir="left" $color="#676767" />
            <Thumb $w={1488} $h={11} $color="#676767" />
            <Arrow $dir="right" $color="#676767" />
          </HBar>
          <BottomArea>
            <Note><Txt $size={15.5}>ChatGPT peut faire des erreurs. Envisagez de vérifier les informations importantes.</Txt></Note>
            <HelpWrap><Round $d={33} $line="#444"><Txt $size={14}>?</Txt></Round></HelpWrap>
          </BottomArea>
          <ScrollDown>
            <Round $d={44} $line="#444" $bg="#212121"><ArrowDown size={24} strokeWidth={2} color="#fff" /></Round>
          </ScrollDown>
          <Composer>
            <Field><Caret /><Txt $size={20.6} $ls={-0.05} $color="#a3a3a3">Poser une question</Txt></Field>
            <Tools>
              <Round $d={50} $line="#4b4b4b" $color="#f0f0f0"><Plus size={25} strokeWidth={2} /></Round>
              <Pill $w={149}><Globe size={22} strokeWidth={2} /><Txt {...TOOL}>Rechercher</Txt></Pill>
              <Pill $w={141} $pad={14} $gap={9}><Bulb /><Txt {...TOOL} $ls={-0.3}>Raisonner</Txt></Pill>
              <Pill $w={247} $gap={7}><Telescope /><Txt {...TOOL}>Recherche approfondie</Txt></Pill>
              <Pill $w={194} $gap={7}><Brush /><Txt {...TOOL} $ls={-0.22}>Créer une image</Txt></Pill>
              <Round $d={50} $line="#4b4b4b"><Dots /></Round>
              <Round $d={50} $line="#4b4b4b" $ml={18}><Mic /></Round>
              <Round $d={50} $bg="#fff" $ml={-3}><Voice /></Round>
            </Tools>
          </Composer>
        </Main>
      </Page>

      <Taskbar>
        <Cell $w={60}><WindowsLogo /></Cell>
        <WinSearch><WinSearchIcon /><Txt $size={17.8} $ls={0.05} $color="#d6d6d6">Taper ici pour rechercher</Txt></WinSearch>
        <Cell $w={61}><TaskView /></Cell>
        <Cell $w={65}><Word /></Cell>
        <Cell $w={60}><Folder /></Cell>
        <Cell $w={62}><Edge /></Cell>
        <Cell $w={62}><RedGear /></Cell>
        <Cell $w={61}><Cmd /></Cell>
        <Cell $w={64}><Acrobat /></Cell>
        <Cell $w={61} $ml={1} $active $open><Chrome /></Cell>
        <Cell $w={51} $ml={6} $open><Notepad /></Cell>
        <Tray>
          <SunBox>
            <svg width="25" height="25" viewBox="0 0 25 25">
              <defs><linearGradient id="sun" x1=".2" y1="0" x2=".7" y2="1"><stop offset="0" stopColor="#f8b62d" /><stop offset="1" stopColor="#ef6c0a" /></linearGradient></defs>
              <circle cx="12.500" cy="12.500" r="12.500" fill="url(#sun)" />
            </svg>
            <CountBadge>1</CountBadge>
          </SunBox>
          <Cell $w={58}><Txt $size={17.5}>26°C</Txt></Cell>
          <Cell $w={56}><Txt $size={17.2}>مشمس</Txt></Cell>
          <Cell $w={17} $ml={31}>
            <svg width="17" height="9" viewBox="0 0 17 9" fill="none" stroke="#f3f3f3" strokeWidth="1.400"><path d="M.6 8.400L8.500.8 16.400 8.400" /></svg>
          </Cell>
          <Cell $w={16} $ml={15}><WifiIcon /></Cell>
          <Cell $w={20} $ml={12}><Battery /></Cell>
          <Cell $w={21} $ml={9}><Sound /></Cell>
          <Clock>
            <Txt $size={14.1}>1:20 PM</Txt>
            <Txt $size={14.1}>05/05/2025</Txt>
          </Clock>
          <Cell $w={30} $ml={16}>
            <NotifyBox>
              <svg width="21" height="20" viewBox="0 0 21 20">
                <path d="M0 0H21V16H11L8 20V16H0z" fill="#fff" />
                <path d="M4 4.500H17M4 8.300H17M4 12H13" stroke="#1b2742" strokeWidth="1.300" />
              </svg>
              <NotifyBadge>6</NotifyBadge>
            </NotifyBox>
          </Cell>
          <ShowDesktop />
        </Tray>
      </Taskbar>

      <Bubble>
        <BubbleHead>
          <Txt $size={19} $weight={600} $ls={-0.15}>Restore pages?</Txt>
          <X size={20} strokeWidth={1.7} />
        </BubbleHead>
        <Txt $size={15.3}>Chrome didn't shut down correctly.</Txt>
        <RestoreButton><Txt $size={14.8} $weight={500}>Restore</Txt></RestoreButton>
      </Bubble>
    </Screen>
  );
}
